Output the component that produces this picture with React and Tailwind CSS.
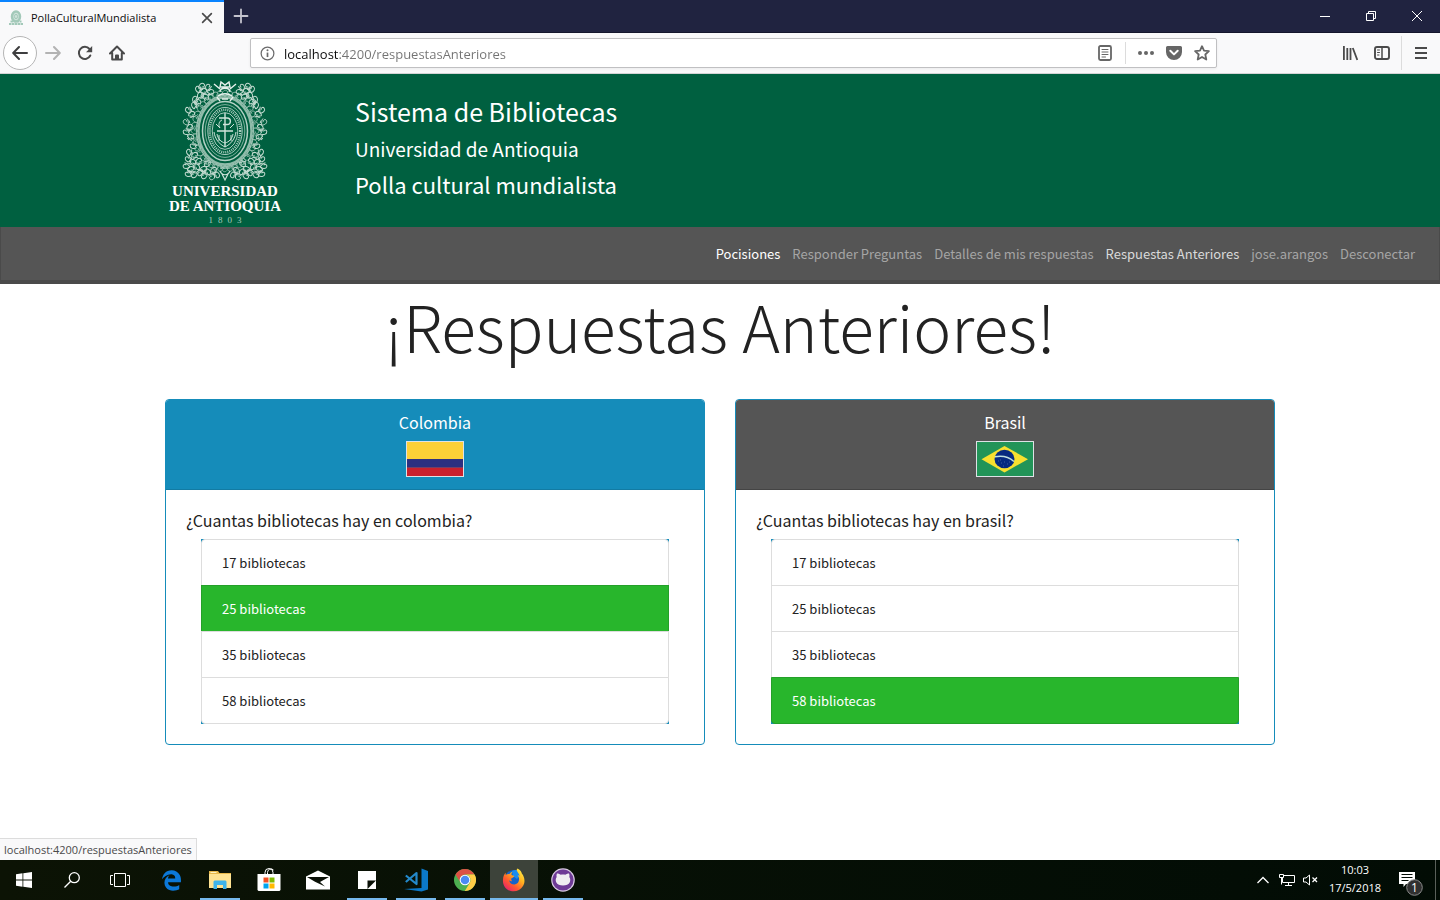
import React from "react";
import { FaEdgeLegacy } from "react-icons/fa";

const UI = "font-['Open_Sans',sans-serif]";
const PAGE = "font-['Noto_Sans_CJK_SC',sans-serif]";

/* ---------- University crest ---------- */

const CX = 65;
const CY = 57;

const scrolls = [];
for (let i = 0; i < 40; i++) {
  const a = (i / 40) * Math.PI * 2;
  scrolls.push({
    x: CX + Math.sin(a) * 31,
    y: CY - Math.cos(a) * 38,
    r: (i / 40) * 360,
    flip: i % 2 ? -1 : 1,
  });
}

/* Foliage on the left half; the right half mirrors it. */
const sprays = [
  [38, 15, -60], [40, 21, -20], [44, 17, 30], [48, 13, -30], [51, 18, 40], [46, 23, 80], [42, 12, 10],
  [34, 31, -50], [28, 36, -80], [32, 40, 20], [35, 25, -30], [38, 28, 60],
  [26, 48, -90], [30, 53, 10], [26, 58, -110], [31, 63, 60],
  [33, 72, -110], [29, 78, -60], [35, 81, 20], [28, 85, -100], [33, 88, 60], [26, 92, -130],
  [31, 95, 30], [28, 100, -120], [34, 101, -170], [37, 93, 100], [39, 87, 10], [40, 99, 170], [44, 95, 40],
  [44, 102, 190], [48, 98, 100], [47, 90, 200], [52, 103, 180], [54, 96, 20], [57, 101, 110],
];

function Curl({ x, y, r, flip = 1 }) {
  return (
    <g transform={`translate(${x} ${y}) rotate(${r}) scale(${flip} 1)`}>
      <path d="M-2.800 2.800C-3.600-.4-1.200-3.600 1.400-2.500 3.400-1.500 2.200 1.200.4.6M-2.800 2.800C-.6 1.600 1.800 3 3.500 1M-1 3.800L1.500 3" />
    </g>
  );
}

function Crest() {
  return (
    <svg viewBox="20 5 90 103" className="h-[103px] w-[90px]" fill="none" stroke="#cfe3da" aria-hidden="true">
      <ellipse cx={CX} cy={CY} rx="26.500" ry="33.500" strokeWidth="2.400" stroke="#8fbba9" />
      <ellipse cx={CX} cy={CY} rx="28.400" ry="35.400" strokeWidth=".8" />
      <ellipse cx={CX} cy={CY} rx="22.500" ry="29.500" strokeWidth="1.500" stroke="#b5d2c6" />
      <ellipse cx={CX} cy={CY} rx="19.800" ry="26.400" strokeWidth=".8" stroke="#9cc3b3" />
      <ellipse cx={CX} cy={CY} rx="17.200" ry="23.600" strokeWidth=".8" />
      <ellipse cx={CX} cy={CY} rx="15.200" ry="21.200" strokeWidth="2.400" strokeDasharray="1 1.100" stroke="#a9cbbd" />
      <ellipse cx={CX} cy={CY} rx="12.800" ry="18.400" strokeWidth=".8" />
      <path strokeWidth="1.400" d="M65 39v34M59 44h8c4.500 0 4.500 6.500 0 6.500h-4M57 57h16" />
      <path strokeWidth="1" d="M54 58c1 7 5 12 11 15 6-3 10-8 11-15M57 60c1 5 4 8 8 9 4-1 7-4 8-9M56 50l4 4M74 50l-4 4M59 61v6M71 61v6M60 54c-2-3-1-7 2-8" />
      <g strokeWidth=".8" stroke="#9cc3b3">
        {scrolls.map((s, i) => <Curl key={i} {...s} />)}
      </g>
      <g strokeWidth="1" stroke="#c3dbd0">
        {sprays.map(([x, y, r], i) => <Curl key={i} x={x} y={y} r={r} />)}
        {sprays.map(([x, y, r], i) => <Curl key={i} x={2 * CX - x} y={y} r={-r} flip={-1} />)}
      </g>
      <path strokeWidth="1.400" stroke="#e6f1ec" d="M54 10l6 5M76 10l-6 5M58 22c4-3 10-3 14 0M60 18c0-5 10-5 10 0M60 13l1-5 4 3 4-3 1 5zM57 23l3 4M73 23l-3 4M62 25h6" />
      <path strokeWidth="1.200" d="M60 97c2 5 8 5 10 0M62 100l3 6 3-6M60 94h10" />
    </svg>
  );
}

function UniversityLogo() {
  return (
    <div className="flex w-[120px] shrink-0 flex-col items-center font-['Liberation_Serif',serif] text-white">
      <Crest />
      <span className="mt-[2px] text-[15px] leading-[15px] font-bold">UNIVERSIDAD</span>
      <span className="text-[15px] leading-[15px] font-bold whitespace-nowrap">DE ANTIOQUIA</span>
      <span className="flex gap-[5px] text-[9px] leading-[12px] text-[#a9cbbd]">
        <span>1</span><span>8</span><span>0</span><span>3</span>
      </span>
    </div>
  );
}

/* ---------- Browser chrome ---------- */

function Stroke({ children, className = "size-4", w = 2 }) {
  return (
    <svg viewBox="0 0 16 16" className={className} fill="none" stroke="currentColor" strokeWidth={w} strokeLinecap="round" strokeLinejoin="round" aria-hidden="true">
      {children}
    </svg>
  );
}

function ToolButton({ label, children, className = "" }) {
  return (
    <button type="button" aria-label={label} className={`flex h-8 w-8 items-center justify-center text-[#4a4a4a] ${className}`}>
      {children}
    </button>
  );
}

function TabBar() {
  return (
    <div className="flex h-[33px] items-stretch border-b border-[#14162c] bg-[#202340]">
      <div className="-mb-px flex w-[224px] items-center border-t-2 border-[#0a84ff] bg-[#f9f9fa] pr-2 pl-2">
        <svg viewBox="0 0 16 16" className="size-4" fill="none" stroke="#a3c9b9" aria-hidden="true">
          <ellipse cx="8" cy="6.500" rx="4" ry="5" strokeWidth="2.500" fill="#cfe2da" />
          <ellipse cx="8" cy="6.500" rx="1.500" ry="2.200" />
          <path d="M2.500 11.500h11M1 14h14" strokeWidth="2" strokeDasharray="2.500 .5" />
        </svg>
        <span className="ml-[7px] flex-1 text-[11px] leading-4 text-[#0c0c0d]">PollaCulturalMundialista</span>
        <button type="button" aria-label="Cerrar pestaña" className="flex size-[18px] items-center justify-center text-[#4a4a4a]">
          <Stroke className="size-[14px]" w={1.9}><path d="M3 3l10 10M13 3L3 13" /></Stroke>
        </button>
      </div>
      <button type="button" aria-label="Nueva pestaña" className="flex w-[34px] items-center justify-center text-[#c4c4ce]">
        <Stroke w={1.8}><path d="M8 1.500v13M1.500 8h13" /></Stroke>
      </button>
      <div className="ml-auto flex text-white">
        <button type="button" aria-label="Minimizar" className="flex w-[46px] items-center justify-center">
          <svg viewBox="0 0 10 10" className="size-[10px]" stroke="currentColor" aria-hidden="true"><path d="M0 5.500h10" /></svg>
        </button>
        <button type="button" aria-label="Restaurar" className="flex w-[46px] items-center justify-center">
          <svg viewBox="0 0 10 10" className="size-[10px]" fill="none" stroke="currentColor" aria-hidden="true"><path d="M.5 2.500h7v7h-7zM2.500 2.500v-2h7v7h-2" /></svg>
        </button>
        <button type="button" aria-label="Cerrar" className="flex w-[46px] items-center justify-center">
          <svg viewBox="0 0 10 10" className="size-[10px]" stroke="currentColor" aria-hidden="true"><path d="M0 0l10 10M10 0L0 10" /></svg>
        </button>
      </div>
    </div>
  );
}

function Toolbar() {
  return (
    <div className="flex h-[41px] items-center border-b border-[#d4d4d6] bg-[#f9f9fa] pl-[3px]">
      <button type="button" aria-label="Atrás" className="flex size-[34px] items-center justify-center rounded-full border border-[#b5b5b5] bg-white text-[#3e3e3f]">
        <Stroke><path d="M15 8H1.500M7 2L1.200 8 7 14" /></Stroke>
      </button>
      <ToolButton label="Adelante" className="text-[#b3b3b3]"><Stroke><path d="M1 8h13.500M9 2l5.800 6L9 14" /></Stroke></ToolButton>
      <ToolButton label="Recargar">
        <svg viewBox="0 0 16 16" className="size-4" fill="none" stroke="currentColor" strokeWidth="2" strokeLinecap="round" aria-hidden="true">
          <path d="M13.300 10.500A6 6 0 1 1 12.500 4" />
          <path d="M15.200 1v6.200H9z" fill="currentColor" stroke="none" />
        </svg>
      </ToolButton>
      <ToolButton label="Inicio">
        <Stroke><path d="M1 8.500L8 1.500l7 7M3.200 8v6.500h9.600V8" /><path d="M7 14v-3.500h2V14" strokeWidth="2" /></Stroke>
      </ToolButton>
      <div className="ml-[117px] flex h-[30px] w-[967px] min-w-0 shrink items-center rounded-[2px] border border-[#c0c0c2] bg-white pl-[9px] shadow-[0_1px_3px_rgba(0,0,0,0.06)]">
        <svg viewBox="0 0 16 16" className="size-[15px] shrink-0" fill="none" stroke="#6a6a6b" aria-hidden="true">
          <circle cx="8" cy="8" r="6.800" strokeWidth="1.300" />
          <path d="M8 7v4.800" strokeWidth="1.800" /><circle cx="8" cy="4.600" r="1.100" fill="#6a6a6b" stroke="none" />
        </svg>
        <input
          type="text"
          aria-label="Dirección"
          defaultValue="localhost:4200/respuestasAnteriores"
          className="ml-[9px] min-w-0 flex-1 bg-[linear-gradient(90deg,#0c0c0d_54px,#737373_54px)] bg-clip-text pt-[2px] text-[13px] leading-5 text-transparent outline-none"
        />
        <button type="button" aria-label="Vista de lectura" className="flex w-8 justify-center text-[#666]">
          <Stroke w={1.8}><rect x="2" y="1" width="12" height="14" rx="1.500" /><path d="M5 4.500h6M5 7h6M5 9.500h6M5 12h3.500" strokeWidth="1" /></Stroke>
        </button>
        <span className="mr-[6px] ml-1 h-[22px] w-px bg-[#dcdcdc]" />
        <button type="button" aria-label="Acciones de página" className="flex w-7 justify-center text-[#666]">
          <svg viewBox="0 0 16 16" className="size-4" fill="currentColor" aria-hidden="true"><circle cx="2" cy="8" r="2" /><circle cx="8" cy="8" r="2" /><circle cx="14" cy="8" r="2" /></svg>
        </button>
        <button type="button" aria-label="Guardar en Pocket" className="flex w-7 justify-center text-[#666]">
          <svg viewBox="0 0 16 16" className="size-4" aria-hidden="true">
            <path fill="currentColor" d="M1.500 1h13A1.500 1.500 0 0 1 16 2.500V7A8 8 0 0 1 0 7V2.500A1.500 1.500 0 0 1 1.500 1z" />
            <path d="M4.300 5.800L8 9.400l3.700-3.600" fill="none" stroke="#fff" strokeWidth="2" strokeLinecap="round" strokeLinejoin="round" />
          </svg>
        </button>
        <button type="button" aria-label="Marcar página" className="flex w-7 justify-center text-[#666]">
          <Stroke w={1.8}><path d="M8 1.200l2 4.500 4.900.5-3.600 3.300 1 5L8 12l-4.300 2.500 1-5L1.100 6.200 6 5.700z" /></Stroke>
        </button>
      </div>
      <div className="ml-auto flex items-center">
        <ToolButton label="Biblioteca">
          <svg viewBox="0 0 16 16" className="size-4" fill="none" stroke="currentColor" strokeWidth="1.800" aria-hidden="true"><path d="M1.900 1v14M5.300 3v12M8.500 3v12M10.800 3l4.500 12" /></svg>
        </ToolButton>
        <ToolButton label="Barra lateral">
          <Stroke w={1.9}><rect x="1" y="2" width="14" height="12" rx="2" /><path d="M8 2v12" strokeWidth="1.500" /><path d="M3.500 5h2M3.500 7.500h2M3.500 10h1.500" strokeWidth="1" /></Stroke>
        </ToolButton>
        <span className="ml-[3px] h-[34px] w-px bg-[#dcdcdc]" />
        <ToolButton label="Menú" className="ml-[3px] mr-[3px]">
          <svg viewBox="0 0 16 16" className="size-4" stroke="currentColor" strokeWidth="2" aria-hidden="true"><path d="M2 3h12M2 8h12M2 13h12" /></svg>
        </ToolButton>
      </div>
    </div>
  );
}

/* ---------- Page ---------- */

const links = [
  ["Pocisiones", "text-white"],
  ["Responder Preguntas", "text-[#a5a5a5]"],
  ["Detalles de mis respuestas", "text-[#a5a5a5]"],
  ["Respuestas Anteriores", "text-[#dadada]"],
  ["jose.arangos", "text-[#a5a5a5]"],
  ["Desconectar", "text-[#a5a5a5]"],
];

function SiteHeader() {
  return (
    <header>
      <div className="bg-[#006040]">
        <div className="mx-auto flex h-[153px] max-w-[1110px] items-start gap-[70px] pt-[5px]">
          <UniversityLogo />
          <div className="pt-[14px] text-white">
            <h2 className="text-[25px] leading-[36px]">Sistema de Bibliotecas</h2>
            <p className="text-[19px] leading-[40px]">Universidad de Antioquia</p>
            <p className="text-[22px] leading-[30px]">Polla cultural mundialista</p>
          </div>
        </div>
      </div>
      <nav className="flex h-[57px] items-center justify-end gap-3 border-x border-b-4 border-[#4a4a4a] bg-[#555] pr-6">
        {links.map(([text, color]) => (
          <a key={text} href="#" className={`text-[13px] leading-5 whitespace-nowrap ${color}`}>{text}</a>
        ))}
      </nav>
    </header>
  );
}

function ColombiaFlag() {
  return (
    <svg viewBox="0 0 56 34" className="h-[36px] w-[58px] border border-[#dee2e6]" preserveAspectRatio="none" role="img" aria-label="Colombia">
      <path fill="#fcd037" d="M0 0h56v17H0z" />
      <path fill="#2d3080" d="M0 17h56v8.500H0z" />
      <path fill="#ca212d" d="M0 25.500h56V34H0z" />
    </svg>
  );
}

function BrasilFlag() {
  return (
    <svg viewBox="0 0 56 34" className="h-[36px] w-[58px] border border-[#dee2e6]" role="img" aria-label="Brasil">
      <path fill="#229458" d="M0 0h56v34H0z" />
      <path fill="#f8e02f" d="M4.500 17.200L27.500 4l23.500 13.200L27.500 30.500z" />
      <ellipse cx="27.500" cy="17" rx="10" ry="9.200" fill="#062a80" />
      <path d="M17.900 14.800c7-1.300 14 .2 19 4.700" fill="none" stroke="#bfe0e0" strokeWidth="1.400" />
      <path d="M21 19h1M24 21h1M27 20h1M30 22h1M26 24h1M32 20h1M23 18h1" stroke="#3d5ca0" />
    </svg>
  );
}

function Card({ team, headerClass, flag, question, answers, correct }) {
  return (
    <section className="flex-1 overflow-hidden rounded-[4px] border border-[#158cba] bg-white">
      <div className={`flex flex-col items-center border-b pt-[10px] pb-3 text-white ${headerClass}`}>
        <h4 className="mb-[6px] text-[16px] leading-[25px]">{team}</h4>
        {flag}
      </div>
      <div className="p-5">
        <h5 className="mb-[9px] text-[16px] leading-5 text-[#222]">{question}</h5>
        <ul className="mx-[15px] bg-[#158cba] text-[13px] leading-5">
          {answers.map((n, i) => (
            <li
              key={n}
              className={`-mb-px border px-5 pt-[13px] pb-3 first:rounded-t-[4px] last:mb-0 last:rounded-b-[4px] ${
                i === correct ? "border-[#24a029] bg-[#28b62c] text-white" : "border-[#ddd] bg-white text-[#222]"
              }`}
            >
              {n} bibliotecas
            </li>
          ))}
        </ul>
      </div>
    </section>
  );
}

/* ---------- Windows taskbar ---------- */

function WindowsIcon() {
  return (
    <svg viewBox="0 0 16 16" className="size-4" fill="#fff" aria-hidden="true"><path d="M0 2.200l6.500-.9v6.200H0zM7.300 1.200L16 0v7.500H7.300zM0 8.400h6.500v6.300L0 13.800zM7.300 8.400H16V16l-8.700-1.200z" /></svg>
  );
}

function ExplorerIcon() {
  return (
    <svg viewBox="0 0 22 20" className="h-5 w-[22px]" aria-hidden="true">
      <path fill="#e8b84a" d="M0 1h9l1.500 2H22v4H0z" />
      <path fill="#fff3c0" d="M1.500 2h6v1h-6z" />
      <path fill="#ffe392" d="M0 4h22v14H0z" />
      <path fill="#3fb4ea" d="M4.500 19v-7.500l1-1h11l1 1V19H14v-4H8v4z" />
    </svg>
  );
}

function StoreIcon() {
  return (
    <svg viewBox="0 0 24 24" className="size-6" aria-hidden="true">
      <path d="M8 7V4.500a4 4 0 0 1 8 0V7M10.500 6V4.500a3.500 3.500 0 0 1 6-2.500" fill="none" stroke="#fff" strokeWidth="1" />
      <path fill="#fff" d="M.5 6h23v16l-1 1h-21l-1-1z" />
      <path fill="#f25022" d="M6.500 9.500h5v5h-5z" /><path fill="#7fba00" d="M12.500 9.500h5v5h-5z" />
      <path fill="#00a4ef" d="M6.500 15.500h5v5h-5z" /><path fill="#ffb900" d="M12.500 15.500h5v5h-5z" />
    </svg>
  );
}

function MailIcon() {
  return (
    <svg viewBox="0 0 24 20" className="h-5 w-6" aria-hidden="true">
      <path fill="#fff" d="M0 6.500L12 .5l12 6v13H0z" />
      <path fill="#0a1006" d="M1 7h22l-9 5 5 4.500L9 11.800z" />
    </svg>
  );
}

function NotesIcon() {
  return (
    <svg viewBox="0 0 18 18" className="size-[18px]" aria-hidden="true">
      <path fill="#fff" d="M0 0h18v18H0z" />
      <path fill="#0a1006" d="M9.500 9.500H18L9.500 18z" />
    </svg>
  );
}

function CodeIcon() {
  return (
    <svg viewBox="0 0 24 24" className="size-6" aria-hidden="true">
      <path fill="#0b78c9" d="M17.500.5L24 3v18.500l-6.500 2L0 21l17.500-1z" />
      <path d="M1.800 7.500l10.700 8.500V5L1.800 14" fill="none" stroke="#2489ca" strokeWidth="2.200" strokeLinejoin="round" />
    </svg>
  );
}

function ChromeIcon() {
  return (
    <svg viewBox="0 0 22 22" className="size-[22px]" aria-hidden="true">
      <circle cx="11" cy="11" r="11" fill="#4caf50" />
      <path fill="#dd5144" d="M1.500 5.500A11 11 0 0 1 20.500 5.500H11a5.500 5.500 0 0 0-5 7.500z" />
      <path fill="#ffcd46" d="M20.500 5.500A11 11 0 0 1 10.800 22l5-8.300a5.500 5.500 0 0 0-4.800-8.200z" />
      <circle cx="11" cy="11" r="5.300" fill="#fff" /><circle cx="11" cy="11" r="4.300" fill="#4a8af4" />
    </svg>
  );
}

function FirefoxIcon() {
  return (
    <svg viewBox="0 0 24 24" className="size-6" aria-hidden="true">
      <defs>
        <linearGradient id="fx" x1=".9" y1="0" x2=".1" y2="1">
          <stop offset="0" stopColor="#fff44f" /><stop offset=".35" stopColor="#ffb41f" /><stop offset=".65" stopColor="#ff5b2e" /><stop offset="1" stopColor="#e3157a" />
        </linearGradient>
      </defs>
      <circle cx="12" cy="11.500" r="9.500" fill="#1463c8" />
      <path fill="#1b8cf0" d="M10 3c4-2 8-.5 9 3l-4 5-4-3z" />
      <path fill="url(#fx)" d="M15.500.5c3 1.500 4 3.300 4.300 5 3 3.500 3.600 8.500 1.200 12.500-2.500 4.300-7.500 6.200-12.200 5C3.500 21.600.5 16.800 1 11.500c.1-2.800 1-5 2.500-6.800l.3 2.300C5 6 6.200 5.700 7.500 6c.7-1.200 1.700-2 3-2.300-.8.9-1.200 2-1 3 .8.7 2 .8 2.800 1.200-.2 1.400-2.300 1.700-3 2.600-.3 1 .1 2 .8 2.700-1.300.2-2.300-.2-3-1 .4 3 3 4.500 5.500 4.300 3.600-.4 5-3.600 4.300-6.700-.2-1.300-.8-2-1.400-2.800 1 .2 1.600.7 2 1.300-.1-3-2.500-4-2.800-6C14.600 1.600 15 1 15.500.5z" />
    </svg>
  );
}

function GithubIcon() {
  return (
    <svg viewBox="0 0 24 24" className="size-6" aria-hidden="true">
      <circle cx="12" cy="12" r="11.800" fill="#d9cbe3" /><circle cx="12" cy="12" r="10.600" fill="#6e3a96" />
      <path fill="#efedf1" d="M6 5.500c1.500 0 2.700.6 3.700 1.300 1.500-.3 3.100-.3 4.600 0 1-.7 2.200-1.300 3.700-1.300.6 1.200.6 2.400.3 3.500 1.200 1.500 1.200 3.500.5 5.300-1 2.600-3.700 3.200-6.800 3.200s-5.800-.6-6.800-3.200c-.7-1.800-.7-3.800.5-5.300-.3-1.100-.3-2.300.3-3.500z" />
    </svg>
  );
}

const apps = [
  ["Microsoft Edge", <FaEdgeLegacy key="e" className="size-[21px] text-[#0c78d8]" />, ""],
  ["Explorador de archivos", <ExplorerIcon key="x" />, "open"],
  ["Microsoft Store", <StoreIcon key="s" />, ""],
  ["Correo", <MailIcon key="m" />, ""],
  ["Notas", <NotesIcon key="n" />, "open"],
  ["Visual Studio Code", <CodeIcon key="c" />, "open"],
  ["Google Chrome", <ChromeIcon key="g" />, "open"],
  ["Firefox", <FirefoxIcon key="f" />, "active"],
  ["GitHub Desktop", <GithubIcon key="h" />, "open"],
];

function Taskbar() {
  return (
    <footer className="flex h-10 shrink-0 items-stretch bg-linear-to-r from-[#0c1305] to-[#020c05] text-white">
      <button type="button" aria-label="Inicio" className="flex w-12 items-center justify-center"><WindowsIcon /></button>
      <button type="button" aria-label="Buscar" className="flex w-12 items-center justify-center">
        <svg viewBox="0 0 16 16" className="size-4" fill="none" stroke="currentColor" strokeWidth="1.300" aria-hidden="true"><circle cx="10.300" cy="5.700" r="5" /><path d="M6.700 9.300L.5 15.500" /></svg>
      </button>
      <button type="button" aria-label="Vista de tareas" className="flex w-12 items-center justify-center">
        <svg viewBox="0 0 20 14" className="h-[14px] w-5" fill="none" stroke="currentColor" aria-hidden="true"><path d="M4.500.5h11v13h-11zM3 2.500H.5v9H3M17 2.500h2.500v9H17" /></svg>
      </button>
      <div className="ml-[3px] flex gap-px">
        {apps.map(([name, icon, state]) => (
          <button
            key={name}
            type="button"
            aria-label={name}
            className={`flex w-12 flex-col items-center ${state === "active" ? "bg-[#3d433a]" : ""}`}
          >
            <span className="flex flex-1 items-center pt-[2px]">{icon}</span>
            <span className={`h-[2px] ${state === "active" ? "w-12 bg-[#76b9ed]" : state === "open" ? "w-10 bg-[#76b9ed]" : "w-10"}`} />
          </button>
        ))}
      </div>
      <div className="ml-auto flex items-center">
        <button type="button" aria-label="Mostrar iconos ocultos" className="flex w-6 justify-center">
          <svg viewBox="0 0 12 8" className="h-2 w-3" fill="none" stroke="currentColor" strokeWidth="1.300" aria-hidden="true"><path d="M.5 7L6 1.500 11.500 7" /></svg>
        </button>
        <button type="button" aria-label="Red" className="flex w-6 justify-center">
          <svg viewBox="0 0 16 14" className="h-[14px] w-4" fill="none" stroke="currentColor" aria-hidden="true"><path d="M5 2.500h10.500v7H3.500V5M9.500 9.500v3M6 12.500h7M.5 1.500h4v3h-4zM2.500 4.500v7" /></svg>
        </button>
        <button type="button" aria-label="Volumen" className="flex w-[22px] justify-center">
          <svg viewBox="0 0 15 12" className="h-3 w-[15px]" fill="none" stroke="currentColor" aria-hidden="true"><path d="M.5 4v4H3l3.500 3V1L3 4z" /><path d="M9.500 3.500l4.500 4.500M14 3.500L9.500 8" strokeWidth="1.300" /></svg>
        </button>
        <div className="w-[68px] pb-[2px] text-center text-[11px] leading-[18px]">
          <div>10:03</div>
          <div>17/5/2018</div>
        </div>
        <button type="button" aria-label="Notificaciones" className="ml-2 flex w-7 justify-center">
          <svg viewBox="0 0 26 32" className="h-8 w-[26px]" aria-hidden="true">
            <path fill="#fff" d="M1 8h16v12H8l-2.500 3v-3H1z" /><path d="M3.500 10.500h11M3.500 13.500h11M3.500 16.500h7" stroke="#020c05" />
            <circle cx="16.500" cy="23.500" r="7.800" fill="#303030" stroke="#8a8a8a" />
            <text x="16.500" y="28" textAnchor="middle" fontSize="12" fill="#fff">1</text>
          </svg>
        </button>
        <span className="ml-[10px] h-10 w-px bg-[#5a605a]" />
        <span className="w-1" />
      </div>
    </footer>
  );
}

export default function App() {
  return (
    <div className={`flex min-h-screen flex-col bg-white ${UI}`}>
      <TabBar />
      <Toolbar />
      <div className={`relative flex flex-1 flex-col ${PAGE}`}>
        <SiteHeader />
        <main className="mx-auto w-full max-w-[1110px]">
          <h1 className="pt-px pb-[34px] text-center text-[64px] leading-[80px] font-light text-[#222]">¡Respuestas Anteriores!</h1>
          <div className="flex items-start gap-[30px]">
            <Card
              team="Colombia"
              headerClass="bg-[#158cba] border-[#127ba3]"
              flag={<ColombiaFlag />}
              question="¿Cuantas bibliotecas hay en colombia?"
              answers={[17, 25, 35, 58]}
              correct={1}
            />
            <Card
              team="Brasil"
              headerClass="bg-[#555] border-[#444]"
              flag={<BrasilFlag />}
              question="¿Cuantas bibliotecas hay en brasil?"
              answers={[17, 25, 35, 58]}
              correct={3}
            />
          </div>
        </main>
        <div className={`absolute bottom-0 left-0 border-t border-r border-[#dcdcdc] bg-[#f9f9fa] px-1 text-[11px] leading-[21px] text-[#4a4a4a] ${UI}`}>
          localhost:4200/respuestasAnteriores
        </div>
      </div>
      <Taskbar />
    </div>
  );
}
